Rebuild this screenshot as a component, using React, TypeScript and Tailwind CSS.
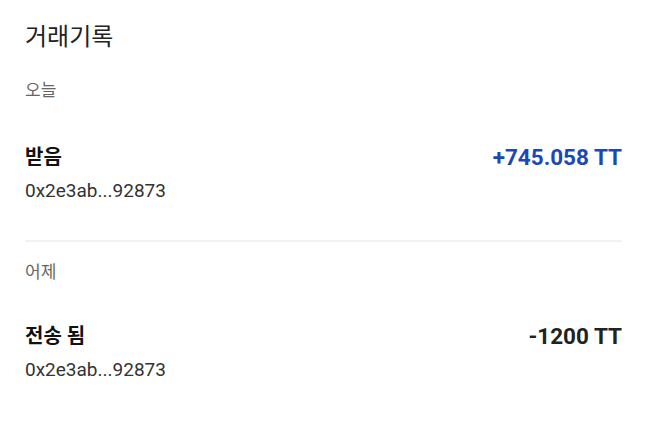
import React from "react";

type Tx = { label: string; address: string; amount: string; positive?: boolean };

const font = "font-['Roboto','Noto_Sans_CJK_KR',sans-serif]";

const Row = ({ tx }: { tx: Tx }) => (
  <div className="flex justify-between items-start">
    <div className="flex flex-col">
      <span className="text-[20px] leading-[28px] font-bold text-[#111]">{tx.label}</span>
      <span className="text-[19px] leading-[24px] mt-[8px] text-[#333]">{tx.address}</span>
    </div>
    <span
      className={
        tx.positive
          ? "text-[22.5px] leading-[28px] font-bold text-[#1a48b5]"
          : "text-[22.5px] leading-[28px] font-bold text-[#222]"
      }
    >
      {tx.amount}
    </span>
  </div>
);

export default function App() {
  return (
    <div className={`w-[647px] h-[423px] bg-white px-[25px] pt-[21px] ${font}`}>
      {/* Title */}
      <h1 className="text-[24px] leading-[32px] text-[#222]">거래기록</h1>

      {/* Today */}
      <div className="mt-[26px] text-[17px] leading-[22px] text-[#666]">오늘</div>
      <div className="mt-[42px]">
        <Row tx={{ label: "받음", address: "0x2e3ab...92873", amount: "+745.058 TT", positive: true }} />
      </div>

      <div className="mt-[37px] h-[2px] w-[597px] bg-[#f2f2f4]" />

      {/* Yesterday */}
      <div className="mt-[19px] text-[17px] leading-[22px] text-[#666]">어제</div>
      <div className="mt-[39px]">
        <Row tx={{ label: "전송 됨", address: "0x2e3ab...92873", amount: "-1200 TT" }} />
      </div>
    </div>
  );
}
